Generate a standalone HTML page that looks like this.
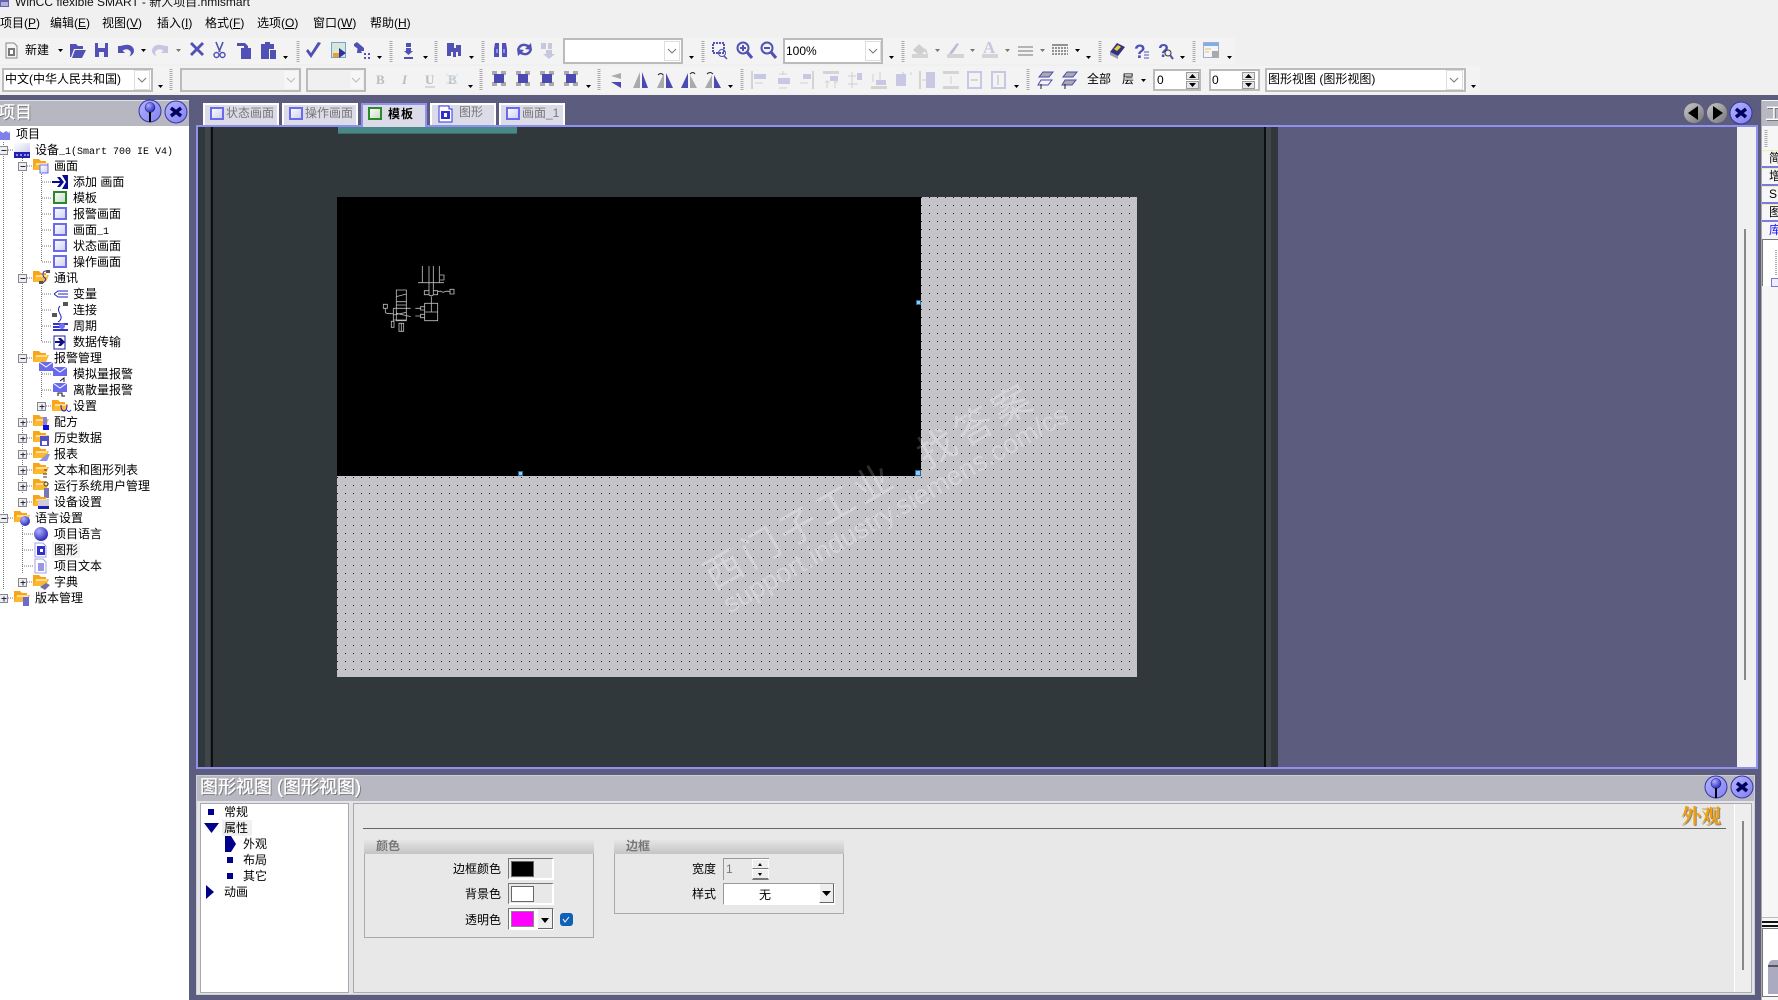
<!DOCTYPE html>
<html lang="zh"><head><meta charset="utf-8"><title>WinCC flexible SMART</title>
<style>
html,body{margin:0;padding:0;width:1778px;height:1000px;overflow:hidden;background:#5c5c7e}
body{position:relative;font:12px/16px "Liberation Sans","WenQuanYi Zen Hei","Noto Sans CJK SC",sans-serif;color:#000}
.b{position:absolute;box-sizing:border-box}
.t{position:absolute;white-space:nowrap;height:16px}
.m{font-family:"Liberation Mono",monospace;font-size:10px}
svg{position:absolute;left:0;top:0}
.g{color:#777}
.h{font-weight:bold;font-size:12px;color:#777}
.r{text-align:right}
</style></head><body>
<!-- chrome backgrounds -->
<div class="b" style="left:0;top:0;width:1778px;height:95px;background:#f0f0f0"></div>
<div class="b" style="left:0;top:38px;width:1235px;height:26px;background:#f3f3f3"></div>
<div class="b" style="left:0;top:66px;width:1480px;height:27px;background:#f3f3f3"></div>
<!-- project panel -->
<div class="b" style="left:0;top:100px;width:189px;height:26px;background:#b7b7c1;border-top:1px solid #dfdfe6"></div>
<div class="b" style="left:0;top:126px;width:189px;height:874px;background:#fff"></div>
<!-- main doc -->
<div class="b" style="left:196px;top:125px;width:1562px;height:644px;background:#5c5c7e;border:2px solid #9090ee"></div>
<div class="b" style="left:198px;top:127px;width:1080px;height:640px;background:#31383b"></div>
<div class="b" style="left:205px;top:127px;width:5px;height:640px;background:#40464a"></div>
<div class="b" style="left:211px;top:127px;width:2px;height:640px;background:#0c0f10"></div>
<div class="b" style="left:1264px;top:127px;width:2px;height:640px;background:#0c0f10"></div>
<div class="b" style="left:1266px;top:127px;width:5px;height:640px;background:#40464a"></div>
<div class="b" style="left:338px;top:127px;width:179px;height:7px;background:#4a8888;border-bottom:1px solid #3a6a6a"></div>
<div class="b" style="left:1737px;top:127px;width:19px;height:640px;background:#f0f0f0"></div>
<div class="b" style="left:1744px;top:229px;width:2px;height:451px;background:#888"></div>
<!-- tabs -->
<div class="b" style="left:203px;top:103px;width:76px;height:22px;background:#dcdce8;border:2px solid #fff;border-bottom:0"></div>
<div class="b" style="left:282px;top:103px;width:76px;height:22px;background:#dcdce8;border:2px solid #fff;border-bottom:0"></div>
<div class="b" style="left:361px;top:103px;width:66px;height:24px;background:#dcdce8;border:2px solid #9090ee;border-bottom:0"></div>
<div class="b" style="left:430px;top:103px;width:66px;height:22px;background:#dcdce8;border:2px solid #fff;border-bottom:0"></div>
<div class="b" style="left:499px;top:103px;width:66px;height:22px;background:#dcdce8;border:2px solid #fff;border-bottom:0"></div>
<!-- bottom panel -->
<div class="b" style="left:196px;top:775px;width:1559px;height:220px;background:#e4e4e8;border:1px solid #cfcfd6"></div>
<div class="b" style="left:197px;top:776px;width:1557px;height:25px;background:#b8b8c2"></div>
<div class="b" style="left:200px;top:803px;width:149px;height:190px;background:#fff;border:1px solid #aaa"></div>
<div class="b" style="left:353px;top:803px;width:1399px;height:190px;background:#e8e8e8;border:1px solid #aaa"></div>
<div class="b" style="left:1734px;top:804px;width:17px;height:188px;background:#eee;border-left:1px solid #fff"></div>
<div class="b" style="left:1742px;top:821px;width:2px;height:149px;background:#888"></div>
<div class="b" style="left:363px;top:828px;width:1363px;height:1px;background:#666"></div>
<div class="b" style="left:222px;top:820px;width:30px;height:16px;background:#f0f0f0"></div>
<div class="b" style="left:52px;top:542px;width:28px;height:16px;background:#f2f2f2"></div>
<!-- groups -->
<div class="b" style="left:364px;top:839px;width:230px;height:99px;border:1px solid #aaa;border-top:0"></div>
<div class="b" style="left:364px;top:839px;width:230px;height:15px;background:linear-gradient(#e8e8e8,#c4c4c4)"></div>
<div class="b" style="left:614px;top:839px;width:230px;height:75px;border:1px solid #aaa;border-top:0"></div>
<div class="b" style="left:614px;top:839px;width:230px;height:15px;background:linear-gradient(#e8e8e8,#c4c4c4)"></div>
<div class="b" style="left:508px;top:858px;width:46px;height:22px;background:#e8e8e8;border:1px solid #fff;border-left-color:#777;border-top-color:#777;border-right:2px solid #fff;border-bottom:2px solid #fff"></div>
<div class="b" style="left:511px;top:861px;width:23px;height:16px;background:#000;border:1px solid #666"></div>
<div class="b" style="left:508px;top:883px;width:46px;height:22px;background:#e8e8e8;border:1px solid #fff;border-left-color:#777;border-top-color:#777;border-right:2px solid #fff;border-bottom:2px solid #fff"></div>
<div class="b" style="left:511px;top:886px;width:23px;height:16px;background:#fff;border:1px solid #666"></div>
<div class="b" style="left:508px;top:908px;width:46px;height:22px;background:#fff;border:1px solid #fff;border-left-color:#777;border-top-color:#777"></div>
<div class="b" style="left:511px;top:911px;width:23px;height:16px;background:#f0f;border:1px solid #888"></div>
<div class="b" style="left:538px;top:909px;width:15px;height:20px;background:#eee;border-right:1px solid #666;border-bottom:1px solid #666"></div>
<div class="b" style="left:560px;top:913px;width:13px;height:13px;background:#1060b8;border-radius:3px"></div>
<div class="b" style="left:723px;top:858px;width:46px;height:22px;background:#e8e8e8;border:1px solid #999;border-right:0;border-bottom:0"></div>
<div class="b" style="left:752px;top:859px;width:17px;height:10px;background:#eee;border:1px solid #fff;border-bottom:1px solid #777"></div>
<div class="b" style="left:752px;top:869px;width:17px;height:11px;background:#eee;border:1px solid #fff;border-bottom:2px solid #777"></div>
<div class="b" style="left:723px;top:883px;width:112px;height:22px;background:#fff;border:1px solid #999;border-right:1px solid #fff;border-bottom:1px solid #fff"></div>
<div class="b" style="left:819px;top:884px;width:15px;height:19px;background:#eee;border-left:1px solid #fff;border-right:1px solid #666;border-bottom:1px solid #666"></div>
<!-- right panel -->
<div class="b" style="left:1761px;top:100px;width:17px;height:900px;background:#f6f6f6;border-left:1px solid #aaa"></div>
<div class="b" style="left:1762px;top:101px;width:16px;height:25px;background:#b8b8c2"></div>
<div class="b" style="left:1762px;top:150px;width:16px;height:1px;background:#f2eeb0"></div>
<div class="b" style="left:1762px;top:166px;width:16px;height:2px;background:#7a7ae0"></div>
<div class="b" style="left:1762px;top:168px;width:16px;height:1px;background:#f2eeb0"></div>
<div class="b" style="left:1762px;top:184px;width:16px;height:2px;background:#7a7ae0"></div>
<div class="b" style="left:1762px;top:186px;width:16px;height:1px;background:#f2eeb0"></div>
<div class="b" style="left:1762px;top:202px;width:16px;height:2px;background:#7a7ae0"></div>
<div class="b" style="left:1762px;top:204px;width:16px;height:1px;background:#f2eeb0"></div>
<div class="b" style="left:1762px;top:220px;width:16px;height:2px;background:#7a7ae0"></div>
<div class="b" style="left:1762px;top:239px;width:16px;height:47px;background:#fff;border:1px solid #777;border-right:0;border-bottom:0"></div>
<div class="b" style="left:1762px;top:917px;width:16px;height:1px;background:#bbb"></div>
<div class="b" style="left:1762px;top:921px;width:16px;height:2px;background:#111"></div>
<div class="b" style="left:1762px;top:925px;width:16px;height:2px;background:#111"></div>
<div class="b" style="left:1762px;top:928px;width:16px;height:69px;background:#fff;border:1px solid #777;border-right:0"></div>

<svg width="1778" height="1000" viewBox="0 0 1778 1000" xmlns="http://www.w3.org/2000/svg">
<defs>
<pattern id="dots" x="337" y="197" width="8" height="8" patternUnits="userSpaceOnUse"><rect width="1" height="1" fill="#222"/></pattern>
<linearGradient id="sc" x1="0" y1="0" x2="1" y2="1"><stop offset="0" stop-color="#fff"/><stop offset="1" stop-color="#ccccee"/></linearGradient>
<linearGradient id="sg" x1="0" y1="0" x2="1" y2="1"><stop offset="0" stop-color="#fff"/><stop offset="1" stop-color="#c4d8c4"/></linearGradient>
<radialGradient id="ball" cx=".35" cy=".3" r=".8"><stop offset="0" stop-color="#b0b0ff"/><stop offset="1" stop-color="#1a1ab0"/></radialGradient>
<linearGradient id="btn" x1="0" y1="0" x2="1" y2="1"><stop offset="0" stop-color="#b4b4ff"/><stop offset="1" stop-color="#8080ee"/></linearGradient>
<linearGradient id="gb" x1="0" y1="0" x2="1" y2="1"><stop offset="0" stop-color="#c8c8c8"/><stop offset="1" stop-color="#777"/></linearGradient>
<g id="scr"><rect x="1" y="1" width="12" height="11" fill="url(#sc)" stroke="#6a6aee" stroke-width="2"/></g>
<g id="scg"><rect x="1" y="1" width="12" height="11" fill="url(#sg)" stroke="#2a8a2a" stroke-width="2"/></g>
<g id="fo"><path d="M0 1h6l2 2h5v2H3L1 12H0z" fill="#f9a51a"/><path d="M3 5h13l-3 7H0z" fill="#fdb92e"/><path d="M3 6h11" stroke="#fff"/></g>
<g id="pb"><rect x="0" y="0" width="8" height="8" fill="#eee" stroke="#888"/><path d="M2 4h5M4.500 2v5" stroke="#225" fill="none"/></g>
<g id="mb"><rect x="0" y="0" width="8" height="8" fill="#eee" stroke="#888"/><path d="M2 4h5" stroke="#225" fill="none"/></g>
<g id="pin"><circle cx="12" cy="12" r="11" fill="url(#btn)" stroke="#3535a5"/><circle cx="12" cy="8.500" r="5" fill="url(#ball)" stroke="#12127a" stroke-width=".5"/><path d="M11 13h2v10h-2z" fill="#000"/></g>
<g id="cl"><circle cx="12" cy="12" r="11" fill="url(#btn)" stroke="#3535a5"/><path d="M7 8l10 8M17 8L7 16" stroke="#000060" stroke-width="3.500"/></g>
<g id="wm">
<text transform="translate(900,517) rotate(-29.600)" text-anchor="middle" font-family="Liberation Sans" font-size="27" textLength="392">support.industry.siemens.com/cs</text>
<text transform="translate(807,537) rotate(-30)" text-anchor="middle" font-family="Noto Sans CJK SC" font-size="38" letter-spacing="5">西门子工业</text>
<text transform="translate(983,437) rotate(-30)" text-anchor="middle" font-family="Noto Sans CJK SC" font-size="38" letter-spacing="5">找答案</text>
</g>
</defs>

<!-- canvas -->
<rect x="337" y="197" width="800" height="480" fill="#c4c4c8"/>
<use href="#wm" fill="rgba(255,255,255,.14)"/>
<rect x="337" y="197" width="800" height="480" fill="url(#dots)"/>
<rect x="337" y="197" width="584" height="279" fill="#000"/>
<use href="#wm" fill="rgba(255,255,255,.18)"/>
<g fill="#88ccff" stroke="#2a6a8a"><rect x="916.500" y="300.500" width="4" height="4"/><rect x="518.500" y="471.500" width="4" height="4"/><rect x="915.500" y="470.500" width="5" height="5"/></g>
<!-- small schematic -->
<g transform="translate(330,120) scale(.3333)" fill="none" stroke="#bdbdbd" stroke-width="2.500">
<path d="M277 438v50M297 438v87M310 438v87M328 438v50M264 488h78M330 465h12v15h-12M283 512h14v12h-14zM310 512h13v12h-13zM323 515q8-3 12 0t10 0t15 0M360 508h12v14h-12zM297 525q7 5 13 0M304 530v20M284 550h39v52h-39zM284 576h39M304 550v26M272 560h12v10h-12zM272 583h12v10h-12zM256 565h16M256 588h16"/>
<path d="M199 510h30v92h-30zM199 530l30-8M199 545h30M199 555h30M190 565h52M190 565v35h39M190 585l40-8M200 580l42 10M160 553h12v12h-12zM166 565v12q2 5 24 4M184 604h8v18h-8zM207 610h14v24h-14zM214 610v24M190 600v5"/>
</g>

<!-- tab icons -->
<use href="#scr" x="210" y="107"/><use href="#scr" x="289" y="107"/><use href="#scg" x="368" y="107"/><use href="#scr" x="506" y="107"/>
<path d="M439 106h10v3h3v13h-13z" fill="#fff" stroke="#3030e0"/><rect x="441" y="111" width="9" height="8" fill="#3030d0"/><rect x="444" y="113" width="3" height="4" fill="#fff"/>

<!-- panel buttons -->
<use href="#pin" x="138" y="99"/><use href="#cl" x="164" y="100"/>
<use href="#pin" x="1704" y="775"/><use href="#cl" x="1730" y="775"/>
<circle cx="1694" cy="113" r="10" fill="url(#gb)"/><path d="M1688 113l10-7v14z" fill="#000"/>
<circle cx="1717" cy="113" r="10" fill="url(#gb)"/><path d="M1723 113l-10-7v14z" fill="#000"/>
<g transform="translate(1729,101)"><use href="#cl"/></g>

<!-- title icon -->
<rect x="0" y="0" width="9" height="7" fill="#6262b0"/><path d="M1 3h7M1 5h7" stroke="#fff"/>

<!-- separators -->
<g stroke="#aaa" stroke-width="3" stroke-dasharray="1 1" fill="none">
<path d="M298 41v21M391 41v21M436 41v21M483 41v21M703 41v21M903 41v21M1100 41v21M1194 41v21"/>
<path d="M171 69v22M481 69v22M599 69v22M742 69v22M1028 69v22"/>
<path d="M1766 130v17"/>
</g>

<!-- combos -->
<g fill="#fff" stroke="#bbb" stroke-width="2">
<rect x="564" y="39" width="118" height="24"/><rect x="784" y="39" width="98" height="24"/>
<rect x="3" y="69" width="149" height="22"/>
<rect x="1154" y="70" width="46" height="20"/><rect x="1210" y="70" width="49" height="20"/>
<rect x="1266" y="69" width="199" height="22"/>
</g>
<g fill="#f0f0f0" stroke="#bbb" stroke-width="2"><rect x="181" y="69" width="119" height="22"/><rect x="307" y="69" width="58" height="22"/></g>
<g fill="#fff" stroke="#ddd"><rect x="664.500" y="41.500" width="15" height="19"/><rect x="865.500" y="41.500" width="15" height="19"/><rect x="134.500" y="70.500" width="15" height="19"/><rect x="1446.500" y="70.500" width="16" height="19"/></g>
<g fill="#f6f6f6" stroke="#eee"><rect x="283.500" y="70.500" width="15" height="19"/><rect x="349.500" y="70.500" width="14" height="19"/></g>
<path d="M668 49l4 4 4-4M869 49l4 4 4-4M138 78l4 4 4-4M1450 78l4 4 4-4" fill="none" stroke="#777"/>
<path d="M287 78l4 4 4-4M352 78l4 4 4-4" fill="none" stroke="#bbb"/>
<g fill="#e8e8e8" stroke="#999"><rect x="1186.500" y="72.500" width="12" height="7"/><rect x="1186.500" y="81.500" width="12" height="7"/><rect x="1242.500" y="72.500" width="12" height="7"/><rect x="1242.500" y="81.500" width="12" height="7"/></g>
<path d="M1189 78l3.500-4 3.500 4zM1189 83l3.500 4 3.500-4zM1245 78l3.500-4 3.500 4zM1245 83l3.500 4 3.500-4z" fill="#000"/>

<!-- dropdown arrows -->
<path d="M58 49h5l-2.500 3zM141 49h5l-2.500 3zM283 56h5l-2.500 3zM377 56h5l-2.500 3zM423 56h5l-2.500 3zM469 56h5l-2.500 3zM689 56h5l-2.500 3zM889 56h5l-2.500 3zM1075 49h5l-2.500 3zM1086 56h5l-2.500 3zM1180 56h5l-2.500 3zM1227 56h5l-2.500 3zM158 85h5l-2.500 3zM468 85h5l-2.500 3zM586 85h5l-2.500 3zM728 85h5l-2.500 3zM1014 85h5l-2.500 3zM1141 79h5l-2.500 3zM1471 85h5l-2.500 3z" fill="#000"/>
<path d="M176 49h5l-2.500 3zM935 49h5l-2.500 3zM970 49h5l-2.500 3zM1005 49h5l-2.500 3zM1040 49h5l-2.500 3z" fill="#777"/>

<!-- row 1 icons -->
<g fill="#5050b5" stroke="none">
<path d="M6 43h8l3 3v12H6z" fill="#f4f4f4" stroke="#888"/><rect x="8" y="48" width="7" height="8" fill="#777"/><rect x="10" y="50" width="3" height="4" fill="#fff"/>
<path d="M70 57V44h6l2 2h5v3H74l-3 8zM72 58l3-8h11l-4 8z"/>
<path d="M95 43h13v14H95z"/><rect x="98" y="43" width="7" height="5" fill="#f0f0f0"/><rect x="99" y="52" width="5" height="5" fill="#f0f0f0"/>
<path d="M118 46v7h7l-2.500-2.500q5-3 8 1 1 2-1 5 6-3 4-8-3-6-13-2.500z"/>
<path d="M168 46v7h-7l2.500-2.500q-5-3-8 1-1 2 1 5-6-3-4-8 3-6 13-2.500z" fill="#c6c6e4"/>
<path d="M190 44l2-2 5 5 5-5 2 2-5 5 5 5-2 2-5-5-5 5-2-2 5-5z"/>
<path d="M216 42l4 10M223 42l-4 10" stroke="#5050b5" stroke-width="1.600" fill="none"/><g fill="none" stroke="#5050b5" stroke-width="1.400"><circle cx="216.500" cy="55" r="2.500"/><circle cx="222.500" cy="55" r="2.500"/></g>
<path d="M237 43h8l3 3v2h-4v-2h-7zM241 48h10v11h-10z"/>
<path d="M261 44h4v-2h5v2h4v5h-5v10h-8zM270 50h6v9h-6z"/>
<path d="M306 51l2-2 3 4 7-11 3 1-10 15z"/>
<path d="M354 44l3-2 7 6v3h-3l-7-5z"/><path d="M358 44l4 9h-5z"/>
<rect x="364" y="53" width="2" height="2"/><rect x="368" y="53" width="2" height="2"/><rect x="364" y="57" width="2" height="2"/><rect x="368" y="57" width="2" height="2"/>
<path d="M406 43h5v4h-5zM406 48h5v3h2l-4.500 4-4.500-4h2zM404 57h9v2h-9z"/>
<path d="M447 43h7v5h2v-3h5v11h-3v-4h-2v5h-3v-5h-2v4h-4z"/>
<path d="M495 43h4v14h-5v-8zM502 43h4l1 6v8h-5z"/><path d="M496 49h2v4h-2zM503 49h2v4h-2z" fill="#8f8fff"/>
<path d="M517 49q3-8 12-4l2-2 1 7-7-1 2-2q-5-3-8 3zM532 50q-3 8-12 4l-2 2-1-7 7 1-2 2q5 3 8-3z"/>
<path d="M541 43h5v6h-5zM548 43h4v6h-4z" fill="#c8c8dc"/><path d="M546 50h6v4h3l-6 5-6-5h3z" fill="#c8c8dc"/>
<g fill="none" stroke="#5050b5" stroke-width="2"><rect x="713" y="43" width="11" height="10" stroke-dasharray="2 1"/><circle cx="722" cy="53" r="3.500" stroke-width="1"/><path d="M724 56l3 3" stroke-width="1.500"/>
<circle cx="743" cy="48" r="5.500"/><path d="M747 52l5 6" stroke-width="3"/><path d="M740 48h6M743 45v6"/>
<circle cx="767" cy="48" r="5.500"/><path d="M771 52l5 6" stroke-width="3"/><path d="M764 48h6"/></g>
<path d="M1110 52l7-9 8 4-7 9z" fill="#33337a"/><path d="M1114 49l4-4 3 2-4 4z" fill="#e5d040"/><path d="M1110 52v3l8 4v-3z" fill="#9a9ab8"/>
<text x="1134" y="58" font-family="Liberation Sans" font-size="19" font-weight="bold">?</text><path d="M1144 52h5M1144 55h5M1144 58h5" stroke="#5050b5"/>
<text x="1158" y="57" font-family="Liberation Sans" font-size="18" font-weight="bold">?</text><circle cx="1168" cy="53" r="3" fill="none" stroke="#333"/><path d="M1170 55l3 4" stroke="#5050b5" stroke-width="2"/>
</g>
<rect x="331.500" y="42.500" width="14" height="15" fill="#d8e8d8" stroke="#7a9ed6"/><path d="M339 48l7 5-7 5z" fill="#3030a0"/><rect x="333" y="53" width="6" height="4" fill="#f0a020"/>
<rect x="1203.500" y="42.500" width="15" height="15" fill="#f4f4fc" stroke="#aac"/><rect x="1204" y="43" width="15" height="3" fill="#7ab0e6"/><rect x="1212" y="51" width="7" height="7" fill="#aaa"/><path d="M1205 49h6M1205 52h4" stroke="#dcc850"/>
<!-- disabled drawing -->
<path d="M913 50l6-6 7 6-6 6zM926 48l2 7-3-3z" fill="#cfcfcf"/><rect x="912" y="54" width="16" height="4" fill="#d4d4d4"/>
<path d="M950 52l7-9 2 1-6 9zM947 56q3-3 3-4l3 1z" fill="#bbbbd8"/><rect x="947" y="54" width="17" height="4" fill="#d4d4d4"/>
<text x="983" y="53" font-family="Liberation Serif" font-weight="bold" font-size="17" fill="#c6c6e0">A</text><rect x="982" y="54" width="16" height="4" fill="#d4d4d4"/>
<path d="M1018 46h15v2h-15zM1018 50h15v2h-15zM1018 54h15v2h-15z" fill="#b4b4b4"/>
<path d="M1052 45h16" stroke="#333"/><path d="M1052 48h16M1052 51h16M1052 54h16" stroke="#333" stroke-dasharray="2 1"/>
<!-- B I U -->
<g font-family="Liberation Serif" font-weight="bold" font-size="13" fill="#bcbcbc"><text x="376" y="84">B</text><text x="402" y="84" font-style="italic">I</text><text x="425" y="84">U</text><text x="448" y="84">B</text></g>
<path d="M425 87h10" stroke="#bcbcbc"/><path d="M446 84l12-10M446 74l12 10" stroke="#cfe0f0"/>
<!-- row 2 icons: overlaps -->
<g fill="#aaa"><path d="M492 71h5v4h-5zM501 71h5v4h-5zM492 82h5v4h-5zM501 82h5v4h-5z"/><path d="M516 71h5v4h-5zM525 71h5v4h-5zM516 82h5v4h-5zM525 82h5v4h-5z"/><path d="M540 71h5v4h-5zM549 71h5v4h-5zM540 82h5v4h-5zM549 82h5v4h-5z"/><path d="M564 71h5v4h-5zM573 71h5v4h-5zM564 82h5v4h-5zM573 82h5v4h-5z"/></g>
<g fill="#4a4ab0"><rect x="494" y="74" width="10" height="9"/><rect x="518" y="74" width="10" height="9"/><rect x="542" y="74" width="10" height="9"/><rect x="566" y="74" width="10" height="9"/></g>
<!-- flips -->
<path d="M621 73v6l-10-3z" fill="#aaa"/><path d="M611 82l10 6v-6z" fill="#4a4ab5"/>
<path d="M640 72v16h-7z" fill="#aaa"/><path d="M642 72v16h6z" fill="#4a4ab5"/>
<path d="M664 73v15h-7z" fill="#aaa"/><path d="M666 73v15h7z" fill="#4a4ab5"/><path d="M658 75q3-3 5 0" fill="none" stroke="#223"/>
<path d="M688 73v15h-7z" fill="#4a4ab5"/><path d="M690 75v13h7z" fill="#aaa"/><path d="M690 74q3-3 5 0" fill="none" stroke="#223"/>
<path d="M712 75v13h-7z" fill="#aaa"/><path d="M714 75v13h7z" fill="#4a4ab5"/><path d="M707 74q3-3 6 0" fill="none" stroke="#223"/>
<!-- align disabled -->
<g fill="#c8c8e4"><rect x="754" y="74" width="12" height="5"/><rect x="778" y="78" width="12" height="6"/><rect x="803" y="74" width="8" height="5"/><rect x="830" y="76" width="8" height="5"/><rect x="857" y="73" width="5" height="7"/><rect x="876" y="80" width="10" height="5"/><rect x="896" y="74" width="10" height="12"/><rect x="926" y="72" width="9" height="16"/></g>
<g fill="#d4d4d4"><rect x="751" y="71" width="2" height="18"/><rect x="812" y="71" width="2" height="18"/><rect x="823" y="71" width="16" height="3"/><rect x="871" y="86" width="16" height="3"/><rect x="919" y="71" width="2" height="18"/><rect x="943" y="71" width="16" height="3"/><rect x="943" y="86" width="16" height="3"/></g>
<g fill="none" stroke="#d0d0d0"><path d="M755 83h8M779 74h8M779 88h8M783 71v4M800 83h8M825 82h5M834 82h4M827 80v8M835 80v8M848 76h8M848 84h10M852 72v16M873 74v8M880 72v8M902 72l3 3M911 72v3M922 80h8M951 76v8"/></g>
<g fill="none" stroke="#c8c8e4" stroke-width="2"><rect x="968" y="72" width="13" height="16"/><rect x="992" y="72" width="13" height="16"/></g>
<path d="M971 80h7M998 75v10" stroke="#b8b8b8"/>
<!-- layers -->
<g fill="#aaa" stroke="#4a4ab5"><path d="M1043 72h10l-4 5h-10z"/><path d="M1041 80h11l-4 5h-10z" fill="none"/><path d="M1067 72h10l-4 5h-10z"/><path d="M1065 80h11l-4 5h-10z"/></g>
<path d="M1041 84v5M1065 84v5" stroke="#222"/>

<!-- tree lines -->
<g stroke="#777" stroke-dasharray="1 1" fill="none">
<path d="M3.500 142V590M22.500 158V494M22.500 526V574M41.500 174V262M41.500 286V342M41.500 366V398"/>
<path d="M8 150h6M8 518h6M8 598h6M27 166h6M27 278h6M27 358h6M27 422h6M27 438h6M27 454h6M27 470h6M27 486h6M27 502h6M22 534h12M22 550h12M22 566h12M27 582h6M42 182h10M42 198h10M42 214h10M42 230h10M42 246h10M42 262h10M42 294h10M42 310h10M42 326h10M42 342h10M42 374h10M42 390h10M46 406h6"/>
</g>
<g transform="translate(.5,.5)">
<use href="#mb" x="-1" y="146"/><use href="#mb" x="18" y="162"/><use href="#mb" x="18" y="274"/><use href="#mb" x="18" y="354"/><use href="#pb" x="37" y="402"/>
<use href="#pb" x="18" y="418"/><use href="#pb" x="18" y="434"/><use href="#pb" x="18" y="450"/><use href="#pb" x="18" y="466"/><use href="#pb" x="18" y="482"/><use href="#pb" x="18" y="498"/>
<use href="#mb" x="-1" y="514"/><use href="#pb" x="18" y="578"/><use href="#pb" x="-1" y="594"/>
</g>
<!-- tree icons -->
<path d="M0 131l3 2 3-2 3 2 1-2v9H0z" fill="#8080e8"/>
<rect x="14" y="143" width="16" height="11" fill="url(#sc)"/><rect x="14" y="152" width="16" height="6" fill="#2020b0"/><path d="M16 155h2M20 155h2M24 155h2M27 155h2" stroke="#fff"/>
<use href="#fo" x="33" y="158"/><rect x="40" y="165" width="8" height="8" fill="url(#sc)" stroke="#6a6aee"/>
<path d="M52 181h8l-3-4h3l4 5-4 5h-3l3-4h-8zM60 175h8v14h-6l4-7-4-7z" fill="#0a0a90"/>
<use href="#scg" x="53" y="191"/><use href="#scr" x="53" y="207"/><use href="#scr" x="53" y="223"/><use href="#scr" x="53" y="239"/><use href="#scr" x="53" y="255"/>
<use href="#fo" x="33" y="270"/><path d="M46 271q-3 0-3 3t2 4-2 5" fill="none" stroke="#3030c0"/><rect x="39" y="281" width="4" height="3" fill="#555"/><rect x="46" y="270" width="4" height="3" fill="#555"/>
<path d="M54 294l4-3h10M58 294h10M54 294l4 3h10" fill="none" stroke="#2020c0"/>
<path d="M60 306q-3 3 0 8t-2 8" fill="none" stroke="#2020c0"/><rect x="63" y="302" width="5" height="4" fill="#555"/><rect x="52" y="313" width="5" height="4" fill="#555"/>
<path d="M53 323h15v2H53zM53 326h11v2H53zM53 329h15v2H53z" fill="#3434c8"/><circle cx="62" cy="326" r="3" fill="#7070f0"/>
<path d="M54 336h11v13H54z" fill="#fff" stroke="#2020a0"/><path d="M55 341h5l-2-3h3l4 4-4 4h-3l2-3h-5z" fill="#101080"/>
<use href="#fo" x="33" y="350"/><path d="M39 362h14v9H39z" fill="#6a6af0"/><path d="M39 362l7 5 7-5" fill="none" stroke="#fff"/>
<path d="M53 367h14v9H53z" fill="#6a6af0"/><path d="M53 367l7 5 7-5" fill="none" stroke="#fff"/><path d="M60 381l4-3v4" stroke="#111" fill="none"/>
<path d="M53 383h14v9H53z" fill="#6a6af0"/><path d="M53 383l7 5 7-5" fill="none" stroke="#fff"/><path d="M58 396v-3h4v3h3" stroke="#111" fill="none"/>
<use href="#fo" x="52" y="399"/><path d="M61 405q0 6 3 6t3-6M67 410q2 3 4 0" fill="none" stroke="#2020c0"/>
<use href="#fo" x="33" y="414"/><rect x="43" y="417" width="4" height="8" fill="#8080e8"/><rect x="43" y="425" width="6" height="5" fill="#1010e0"/>
<use href="#fo" x="33" y="430"/><rect x="40" y="436" width="9" height="10" fill="#5050c8"/><rect x="42" y="441" width="5" height="4" fill="#fff"/>
<use href="#fo" x="33" y="446"/><path d="M39 461l8-7 3 0-3 7z" fill="#9090e0"/>
<use href="#fo" x="33" y="462"/><path d="M44 470h3M43 474h4M43 477h4" stroke="#333"/>
<use href="#fo" x="33" y="478"/><rect x="44" y="488" width="5" height="10" fill="#7777bb"/><circle cx="46" cy="484" r="2" fill="none" stroke="#444"/>
<use href="#fo" x="33" y="494"/><rect x="38" y="500" width="11" height="8" fill="#ccd"/><rect x="38" y="506" width="11" height="3" fill="#2020b0"/>
<use href="#fo" x="14" y="510"/><circle cx="25" cy="521" r="5" fill="url(#ball)"/>
<circle cx="41" cy="534" r="7" fill="url(#ball)"/>
<path d="M35 543h8l3 3v11H35z" fill="#fff" stroke="#a0a0e0"/><rect x="37" y="546" width="8" height="9" fill="#3030d0"/><rect x="40" y="549" width="3" height="3" fill="#fff"/>
<path d="M35 559h8l3 3v11H35z" fill="#fff" stroke="#a0a0e0"/><path d="M38 564h6M38 566h6M38 568h6M38 570h6" stroke="#3030d0"/>
<use href="#fo" x="33" y="574"/><path d="M40 587l6-4 4 2-5 5z" fill="#7070a8"/>
<use href="#fo" x="14" y="590"/><rect x="23" y="597" width="6" height="9" fill="#6a6ad0"/>

<!-- bottom tree markers -->
<g fill="#00008b"><rect x="208" y="809" width="6" height="6"/><rect x="227" y="857" width="6" height="6"/><rect x="227" y="873" width="6" height="6"/>
<path d="M204 823h15l-7.500 10zM206 885l8 7-8 7zM225 836h6l5 8-5 8h-6z"/></g>
<path d="M563 919l2 3 4-5" stroke="#fff" fill="none"/>
<path d="M541 918h8l-4 5z" fill="#000"/>
<path d="M758 866h4l-2-3zM758 873h4l-2 3z" fill="#000"/>
<path d="M822 891h9l-4.500 5z" fill="#000"/>
<!-- right tree -->
<path d="M1776 250v26" stroke="#555" stroke-dasharray="1 1"/><rect x="1771.500" y="278.500" width="8" height="8" fill="#eef" stroke="#7777cc"/>
<path d="M1768 966q1-6 5-6h5v34h-10z" fill="#aaaac0"/><rect x="1768" y="965" width="10" height="2" fill="#555"/>
</svg>

<!-- title + menu -->
<span class="t" style="left:15px;top:-6px;color:#111;font-size:12px">WinCC flexible SMART - 新人项目.hmismart</span>
<span class="t" style="left:0;top:15px">项目(<u>P</u>)</span>
<span class="t" style="left:50px;top:15px">编辑(<u>E</u>)</span>
<span class="t" style="left:102px;top:15px">视图(<u>V</u>)</span>
<span class="t" style="left:157px;top:15px">插入(<u>I</u>)</span>
<span class="t" style="left:205px;top:15px">格式(<u>F</u>)</span>
<span class="t" style="left:257px;top:15px">选项(<u>O</u>)</span>
<span class="t" style="left:313px;top:15px">窗口(<u>W</u>)</span>
<span class="t" style="left:370px;top:15px">帮助(<u>H</u>)</span>
<span class="t" style="left:25px;top:42px">新建</span>
<span class="t" style="left:786px;top:43px">100%</span>
<span class="t" style="left:5px;top:71px">中文(中华人民共和国)</span>
<span class="t" style="left:1087px;top:71px">全部</span>
<span class="t" style="left:1122px;top:71px">层</span>
<span class="t" style="left:1157px;top:72px">0</span>
<span class="t" style="left:1212px;top:72px">0</span>
<span class="t" style="left:1268px;top:71px">图形视图 (图形视图)</span>

<!-- panel titles -->
<span class="t" style="left:-2px;top:101px;height:24px;font-size:17px;line-height:24px;color:#fff;text-shadow:1px 1px 0 #777;-webkit-text-stroke:.3px #fff">项目</span>
<span class="t" style="left:200px;top:776px;height:24px;font-size:18px;line-height:22px;color:#fff;text-shadow:1px 1px 0 #777;-webkit-text-stroke:.3px #fff">图形视图 (图形视图)</span>
<span class="t" style="left:1765px;top:102px;height:24px;font-size:18px;line-height:24px;color:#fff;text-shadow:1px 1px 0 #777">工具</span>
<span class="t" style="left:1681px;top:803px;height:24px;font-size:20px;line-height:24px;font-weight:bold;color:#f0a010;text-shadow:1px 1px 0 #888;font-family:'Noto Serif CJK SC',serif">外观</span>

<!-- tabs text -->
<span class="t g" style="left:226px;top:105px">状态画面</span>
<span class="t g" style="left:305px;top:105px">操作画面</span>
<span class="t" style="left:388px;top:106px;font-weight:bold;letter-spacing:1px">模板</span>
<span class="t g" style="left:459px;top:104px">图形</span>
<span class="t g" style="left:522px;top:105px">画面_1</span>

<!-- tree -->
<span class="t" style="left:16px;top:126px">项目</span>
<span class="t" style="left:35px;top:142px">设备<span class="m">_1(Smart 700 IE V4)</span></span>
<span class="t" style="left:54px;top:158px">画面</span>
<span class="t" style="left:73px;top:174px">添加 画面</span>
<span class="t" style="left:73px;top:190px">模板</span>
<span class="t" style="left:73px;top:206px">报警画面</span>
<span class="t" style="left:73px;top:222px">画面<span class="m">_1</span></span>
<span class="t" style="left:73px;top:238px">状态画面</span>
<span class="t" style="left:73px;top:254px">操作画面</span>
<span class="t" style="left:54px;top:270px">通讯</span>
<span class="t" style="left:73px;top:286px">变量</span>
<span class="t" style="left:73px;top:302px">连接</span>
<span class="t" style="left:73px;top:318px">周期</span>
<span class="t" style="left:73px;top:334px">数据传输</span>
<span class="t" style="left:54px;top:350px">报警管理</span>
<span class="t" style="left:73px;top:366px">模拟量报警</span>
<span class="t" style="left:73px;top:382px">离散量报警</span>
<span class="t" style="left:73px;top:398px">设置</span>
<span class="t" style="left:54px;top:414px">配方</span>
<span class="t" style="left:54px;top:430px">历史数据</span>
<span class="t" style="left:54px;top:446px">报表</span>
<span class="t" style="left:54px;top:462px">文本和图形列表</span>
<span class="t" style="left:54px;top:478px">运行系统用户管理</span>
<span class="t" style="left:54px;top:494px">设备设置</span>
<span class="t" style="left:35px;top:510px">语言设置</span>
<span class="t" style="left:54px;top:526px">项目语言</span>
<span class="t" style="left:54px;top:542px">图形</span>
<span class="t" style="left:54px;top:558px">项目文本</span>
<span class="t" style="left:54px;top:574px">字典</span>
<span class="t" style="left:35px;top:590px">版本管理</span>

<!-- property tree -->
<span class="t" style="left:224px;top:804px">常规</span>
<span class="t" style="left:224px;top:820px">属性</span>
<span class="t" style="left:243px;top:836px">外观</span>
<span class="t" style="left:243px;top:852px">布局</span>
<span class="t" style="left:243px;top:868px">其它</span>
<span class="t" style="left:224px;top:884px">动画</span>

<!-- property content -->
<span class="t h" style="left:376px;top:838px">颜色</span>
<span class="t h" style="left:626px;top:838px">边框</span>
<span class="t r" style="left:401px;width:100px;top:861px">边框颜色</span>
<span class="t r" style="left:401px;width:100px;top:886px">背景色</span>
<span class="t r" style="left:401px;width:100px;top:912px">透明色</span>
<span class="t r" style="left:616px;width:100px;top:861px">宽度</span>
<span class="t r" style="left:616px;width:100px;top:886px">样式</span>
<span class="t g" style="left:726px;top:861px">1</span>
<span class="t" style="left:759px;top:887px">无</span>

<!-- right panel labels -->
<span class="t" style="left:1769px;top:150px">简</span>
<span class="t" style="left:1769px;top:168px">增</span>
<span class="t" style="left:1769px;top:186px">SI</span>
<span class="t" style="left:1769px;top:204px">图</span>
<span class="t" style="left:1769px;top:222px;color:#1a1aff">库</span>
</body></html>
